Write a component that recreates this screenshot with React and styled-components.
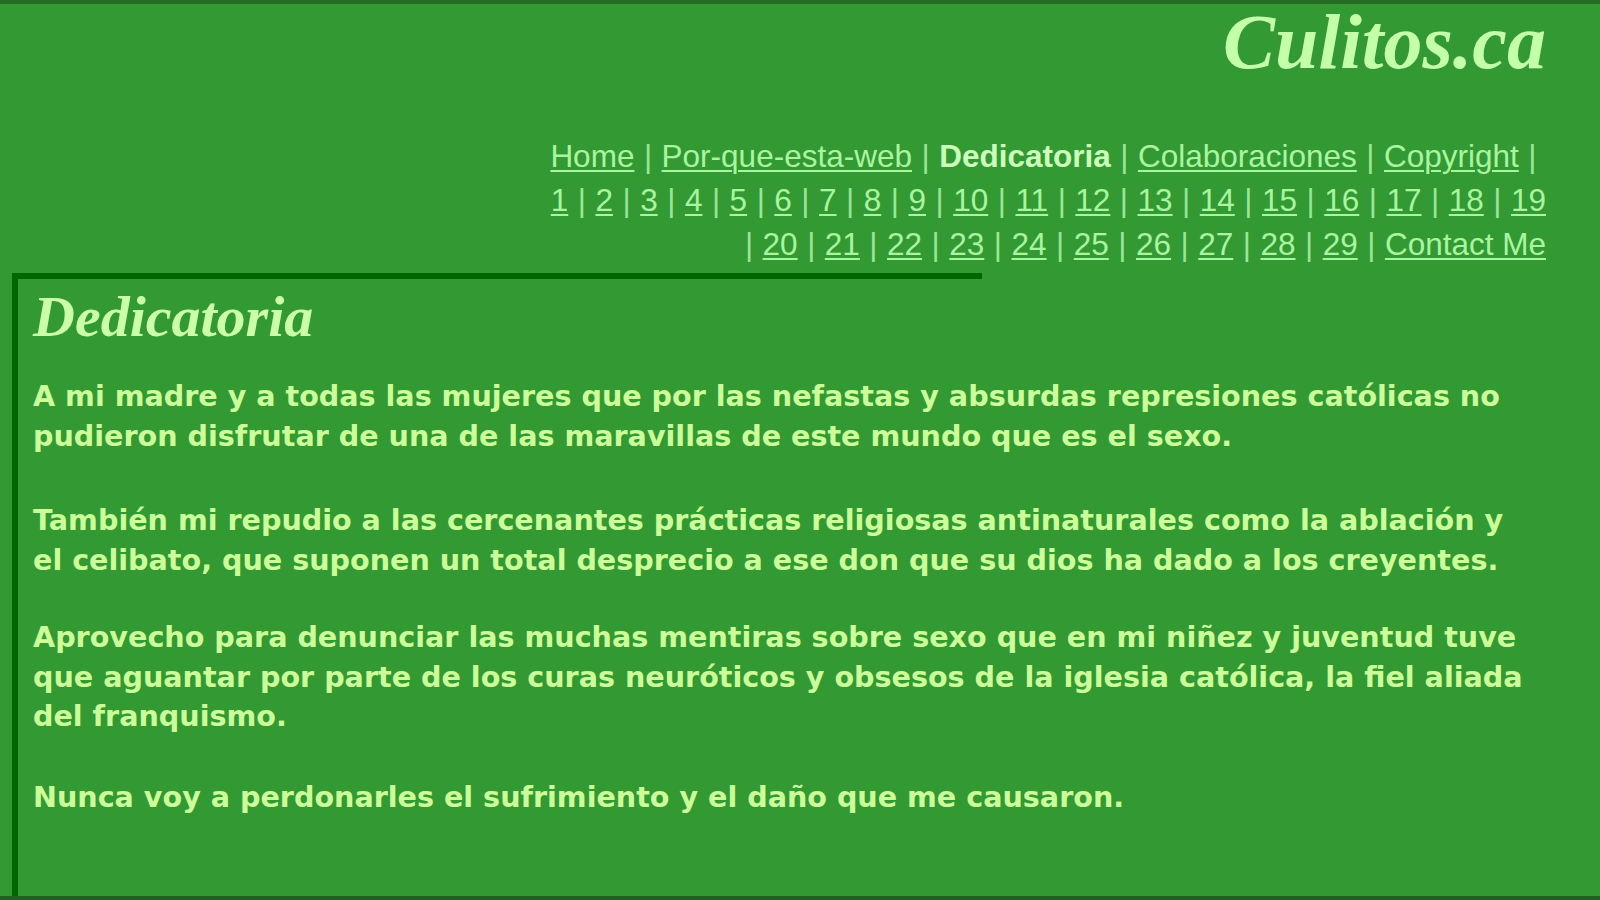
import React from "react";
import styled, { createGlobalStyle } from "styled-components";

const GlobalStyle = createGlobalStyle`
	html, body {
		margin: 0;
		padding: 0;
		background: #339933;
	}
	body {
		height: 900px;
		overflow: hidden;
	}
`;

const pages = [
	"1", "2", "3", "4", "5", "6", "7", "8", "9", "10",
	"11", "12", "13", "14", "15", "16", "17", "18", "19",
];
const pages2 = ["20", "21", "22", "23", "24", "25", "26", "27", "28", "29"];

function App() {
	return (
		<>
			<GlobalStyle />
			<Page>
				<Header>
					<Logo>Culitos.ca</Logo>
					<Nav>
						<NavLine>
							<NavLink href="#">Home</NavLink>
							<Sep>|</Sep>
							<NavLink href="#">Por-que-esta-web</NavLink>
							<Sep>|</Sep>
							<Current>Dedicatoria</Current>
							<Sep>|</Sep>
							<NavLink href="#">Colaboraciones</NavLink>
							<Sep>|</Sep>
							<NavLink href="#">Copyright</NavLink>
							<Sep>|</Sep>
						</NavLine>
						<NavLine>
							{pages.map((p, i) => (
								<React.Fragment key={p}>
									{i > 0 && <Sep>|</Sep>}
									<NavLink href="#">{p}</NavLink>
								</React.Fragment>
							))}
						</NavLine>
						<NavLine>
							{pages2.map((p) => (
								<React.Fragment key={p}>
									<Sep>|</Sep>
									<NavLink href="#">{p}</NavLink>
								</React.Fragment>
							))}
							<Sep>|</Sep>
							<NavLink href="#">Contact Me</NavLink>
						</NavLine>
					</Nav>
				</Header>
				<Content>
					<Title>Dedicatoria</Title>
					<Text $gap={45}>
						A mi madre y a todas las mujeres que por las nefastas y absurdas
						represiones católicas no
						<br />
						pudieron disfrutar de una de las maravillas de este mundo que es el
						sexo.
					</Text>
					<Text $gap={38}>
						También mi repudio a las cercenantes prácticas religiosas
						antinaturales como la ablación y
						<br />
						el celibato, que suponen un total desprecio a ese don que su dios ha
						dado a los creyentes.
					</Text>
					<Text $gap={41}>
						Aprovecho para denunciar las muchas mentiras sobre sexo que en mi
						niñez y juventud tuve
						<br />
						que aguantar por parte de los curas neuróticos y obsesos de la
						iglesia católica, la fiel aliada
						<br />
						del franquismo.
					</Text>
					<Text $gap={0}>
						Nunca voy a perdonarles el sufrimiento y el daño que me causaron.
					</Text>
				</Content>
			</Page>
		</>
	);
}

export default App;

const Page = styled.div`
	height: 900px;
	box-sizing: border-box;
	border-top: 4px solid #256b25;
	border-bottom: 4px solid #1f5f1f;
	display: flex;
	flex-direction: column;
`;

const Header = styled.div`
	display: flex;
	flex-direction: column;
	align-items: flex-end;
	padding-right: 54px;
`;

const Logo = styled.div`
	font-family: "Liberation Serif", "DejaVu Serif", serif;
	font-style: italic;
	font-weight: bold;
	font-size: 78px;
	line-height: 76px;
	color: #c4ffaa;
`;

const Nav = styled.div`
	margin-top: 54px;
	display: flex;
	flex-direction: column;
	align-items: flex-end;
	font-family: "Liberation Sans", Arial, sans-serif;
	font-size: 31.5px;
	line-height: 44px;
`;

const NavLine = styled.div`
	display: flex;
	white-space: nowrap;
`;

const NavLink = styled.a`
	color: #aaf5a0;
	text-decoration: underline;
	text-underline-offset: 3px;
	text-decoration-thickness: 2px;
`;

const Current = styled.span`
	color: #ccffbb;
	font-weight: bold;
`;

const Sep = styled.span`
	color: #99e699;
	padding: 0 9.5px;
`;

const Content = styled.div`
	margin: 7px 0 0 12px;
	flex: 1;
	border-left: 6px solid #006600;
	position: relative;
	padding: 12px 20px 0 15px;

	&::before {
		content: "";
		position: absolute;
		top: 0;
		left: -6px;
		width: 970px;
		height: 6px;
		background: #006600;
	}
`;

const Title = styled.h1`
	margin: 0 0 28px;
	font-family: "Liberation Serif", "DejaVu Serif", serif;
	font-style: italic;
	font-weight: bold;
	font-size: 58px;
	line-height: 64px;
	color: #ccffaa;
`;

const Text = styled.p`
	margin: 0 0 ${(p) => p.$gap}px;
	font-family: "DejaVu Sans", Verdana, sans-serif;
	font-weight: bold;
	font-size: 28.6px;
	line-height: 39.5px;
	color: #ccff99;
	white-space: nowrap;
`;
